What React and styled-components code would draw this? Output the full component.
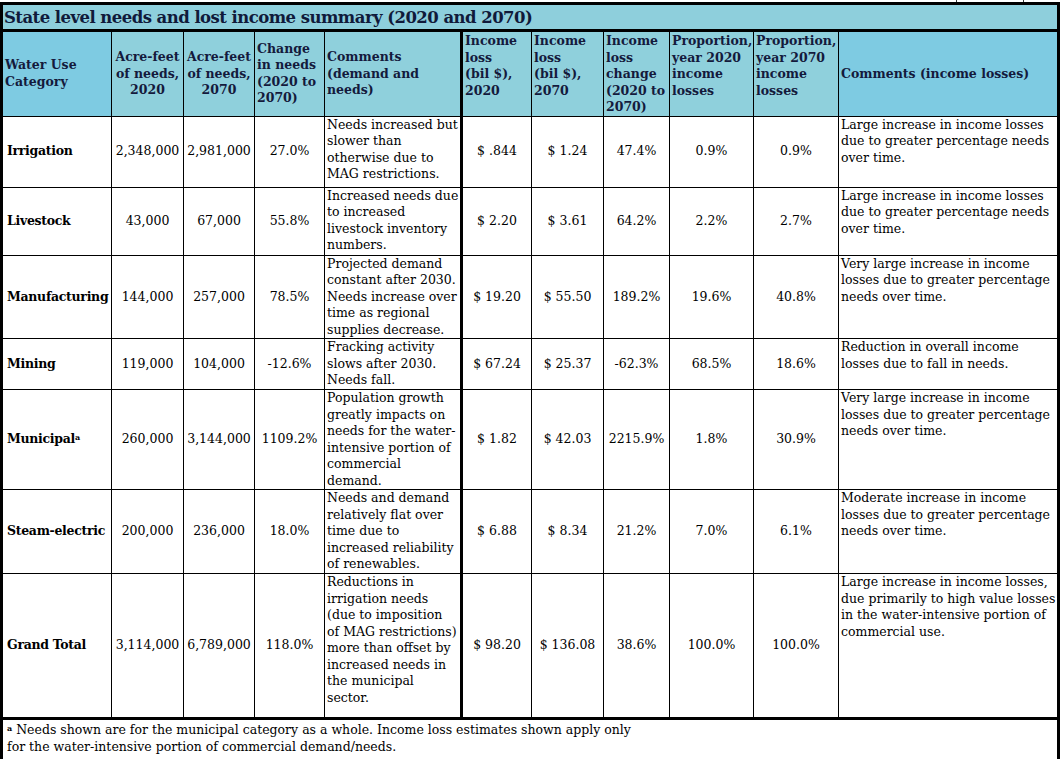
import React from "react";
import styled, { createGlobalStyle } from "styled-components";

const GlobalStyle = createGlobalStyle`
  html, body {
    margin: 0;
    padding: 0;
    background: #ffffff;
  }
  body {
    font-family: "DejaVu Serif", "Liberation Serif", serif;
    color: #000;
  }
`;

const Page = styled.div`
  width: 1062px;
`;

// leftovers of the previous table peeking over the top edge
const TopEdge = styled.div`
  height: 2px;
  display: flex;
`;

const Tick = styled.span`
  width: 1px;
  height: 2px;
  background: #333;
  margin-left: ${(p) => p.$at}px;
`;

const Table = styled.table`
  border-collapse: collapse;
  table-layout: fixed;
  width: 1059px;
  border: 3px solid #000;
  font-size: 12.5px;
  line-height: 16.5px;
`;

const TitleCell = styled.th`
  background: #8ecfdc;
  color: #101a3a;
  font-size: 16.5px;
  font-weight: bold;
  text-align: left;
  padding: 2px 2px 0 1px;
  height: 22px;
  border-bottom: 3px solid #000;
  white-space: nowrap;
  letter-spacing: -0.55px;
`;

const HeadCell = styled.th`
  background: ${(p) => (p.$strong ? "#7ecbe2" : "#8fd0dc")};
  color: #141a3c;
  font-weight: bold;
  text-align: ${(p) => p.$align || "left"};
  vertical-align: ${(p) => p.$valign || "middle"};
  padding: ${(p) => (p.$valign === "top" ? "1px" : "0")} 2px 0;
  border: 1px solid #000;
  border-right-width: ${(p) => (p.$thick ? "3px" : "1px")};
  white-space: nowrap;
`;

const Row = styled.tr`
  height: ${(p) => p.$h}px;
`;

const Cat = styled.td`
  font-weight: bold;
  text-align: left;
  vertical-align: middle;
  padding: 0 1px 0 4px;
  border: 1px solid #000;
  white-space: nowrap;
  letter-spacing: -0.3px;
`;

const Num = styled.td`
  text-align: center;
  vertical-align: middle;
  padding: 0 2px;
  border: 1px solid #000;
  white-space: nowrap;
`;

const Note = styled.td`
  text-align: left;
  vertical-align: top;
  padding: 0 2px;
  border: 1px solid #000;
  border-right-width: ${(p) => (p.$thick ? "3px" : "1px")};
  white-space: nowrap;
`;

const Sup = styled.sup`
  font-size: 8px;
  line-height: 0;
  vertical-align: 3px;
  font-weight: bold;
`;

const FootCell = styled.td`
  border-top: 3px solid #000;
  padding: 2px 4px 1px;
  height: 36px;
  vertical-align: top;
  white-space: nowrap;
`;

const Lines = ({ items }) =>
  items.map((t, i) => (
    <React.Fragment key={i}>
      {t}
      {i < items.length - 1 && <br />}
    </React.Fragment>
  ));

const widths = [110, 72, 71, 70, 137, 70, 72, 66, 84, 85, 220];

const rows = [
  {
    cat: "Irrigation", a: "2,348,000", b: "2,981,000", ch: "27.0%",
    dc: ["Needs increased but", "slower than", "otherwise due to", "MAG restrictions."],
    i1: "$ .844", i2: "$ 1.24", ic: "47.4%", p1: "0.9%", p2: "0.9%",
    cc: ["Large increase in income losses", "due to greater percentage needs", "over time."],
    h: 71,
  },
  {
    cat: "Livestock", a: "43,000", b: "67,000", ch: "55.8%",
    dc: ["Increased needs due", "to increased", "livestock inventory", "numbers."],
    i1: "$ 2.20", i2: "$ 3.61", ic: "64.2%", p1: "2.2%", p2: "2.7%",
    cc: ["Large increase in income losses", "due to greater percentage needs", "over time."],
    h: 68,
  },
  {
    cat: "Manufacturing", a: "144,000", b: "257,000", ch: "78.5%",
    dc: ["Projected demand", "constant after 2030.", "Needs increase over", "time as regional", "supplies decrease."],
    i1: "$ 19.20", i2: "$ 55.50", ic: "189.2%", p1: "19.6%", p2: "40.8%",
    cc: ["Very large increase in income", "losses due to greater percentage", "needs over time."],
    h: 83,
  },
  {
    cat: "Mining", a: "119,000", b: "104,000", ch: "-12.6%",
    dc: ["Fracking activity", "slows after 2030.", "Needs fall."],
    i1: "$ 67.24", i2: "$ 25.37", ic: "-62.3%", p1: "68.5%", p2: "18.6%",
    cc: ["Reduction in overall income", "losses due to fall in needs."],
    h: 51,
  },
  {
    cat: "Municipal", sup: "a", a: "260,000", b: "3,144,000", ch: "1109.2%",
    dc: ["Population growth", "greatly impacts on", "needs for the water-", "intensive portion of", "commercial", "demand."],
    i1: "$ 1.82", i2: "$ 42.03", ic: "2215.9%", p1: "1.8%", p2: "30.9%",
    cc: ["Very large increase in income", "losses due to greater percentage", "needs over time."],
    h: 100,
  },
  {
    cat: "Steam-electric", a: "200,000", b: "236,000", ch: "18.0%",
    dc: ["Needs and demand", "relatively flat over", "time due to", "increased reliability", "of renewables."],
    i1: "$ 6.88", i2: "$ 8.34", ic: "21.2%", p1: "7.0%", p2: "6.1%",
    cc: ["Moderate increase in income", "losses due to greater percentage", "needs over time."],
    h: 84,
  },
  {
    cat: "Grand Total", a: "3,114,000", b: "6,789,000", ch: "118.0%",
    dc: ["Reductions in", "irrigation needs", "(due to imposition", "of MAG restrictions)", "more than offset by", "increased needs in", "the municipal", "sector."],
    i1: "$ 98.20", i2: "$ 136.08", ic: "38.6%", p1: "100.0%", p2: "100.0%",
    cc: ["Large increase in income losses,", "due primarily to high value losses", "in the water-intensive portion of", "commercial use."],
    h: 145,
  },
];

export default function App() {
  return (
    <Page>
      <GlobalStyle />
      <TopEdge>
        <Tick $at={956} />
        <Tick $at={66} />
      </TopEdge>
      <Table>
        <colgroup>
          {widths.map((w, i) => (
            <col key={i} style={{ width: w }} />
          ))}
        </colgroup>
        <thead>
          <tr>
            <TitleCell colSpan={11}>
              State level needs and lost income summary (2020 and 2070)
            </TitleCell>
          </tr>
          <Row $h={85}>
            <HeadCell $strong>
              <Lines items={["Water Use", "Category"]} />
            </HeadCell>
            <HeadCell $align="center">
              <Lines items={["Acre-feet", "of needs,", "2020"]} />
            </HeadCell>
            <HeadCell $align="center">
              <Lines items={["Acre-feet", "of needs,", "2070"]} />
            </HeadCell>
            <HeadCell>
              <Lines items={["Change", "in needs", "(2020 to", "2070)"]} />
            </HeadCell>
            <HeadCell $thick>
              <Lines items={["Comments", "(demand and", "needs)"]} />
            </HeadCell>
            <HeadCell $valign="top">
              <Lines items={["Income", "loss", " (bil $),", "2020"]} />
            </HeadCell>
            <HeadCell $valign="top">
              <Lines items={["Income", "loss", "(bil $),", "2070"]} />
            </HeadCell>
            <HeadCell $valign="top">
              <Lines items={["Income", "loss", "change", "(2020 to", "2070)"]} />
            </HeadCell>
            <HeadCell $valign="top">
              <Lines items={["Proportion,", "year 2020", "income", "losses"]} />
            </HeadCell>
            <HeadCell $valign="top">
              <Lines items={["Proportion,", "year 2070", "income", "losses"]} />
            </HeadCell>
            <HeadCell $strong>Comments (income losses)</HeadCell>
          </Row>
        </thead>
        <tbody>
          {rows.map((r) => (
            <Row key={r.cat} $h={r.h}>
              <Cat>
                {r.cat}
                {r.sup && <Sup>{r.sup}</Sup>}
              </Cat>
              <Num>{r.a}</Num>
              <Num>{r.b}</Num>
              <Num>{r.ch}</Num>
              <Note $thick>
                <Lines items={r.dc} />
              </Note>
              <Num>{r.i1}</Num>
              <Num>{r.i2}</Num>
              <Num>{r.ic}</Num>
              <Num>{r.p1}</Num>
              <Num>{r.p2}</Num>
              <Note>
                <Lines items={r.cc} />
              </Note>
            </Row>
          ))}
        </tbody>
        <tfoot>
          <tr>
            <FootCell colSpan={11}>
              <Sup as="span">a</Sup> Needs shown are for the municipal category as a whole. Income loss estimates shown apply only
              <br />
              for the water-intensive portion of commercial demand/needs.
            </FootCell>
          </tr>
        </tfoot>
      </Table>
    </Page>
  );
}
